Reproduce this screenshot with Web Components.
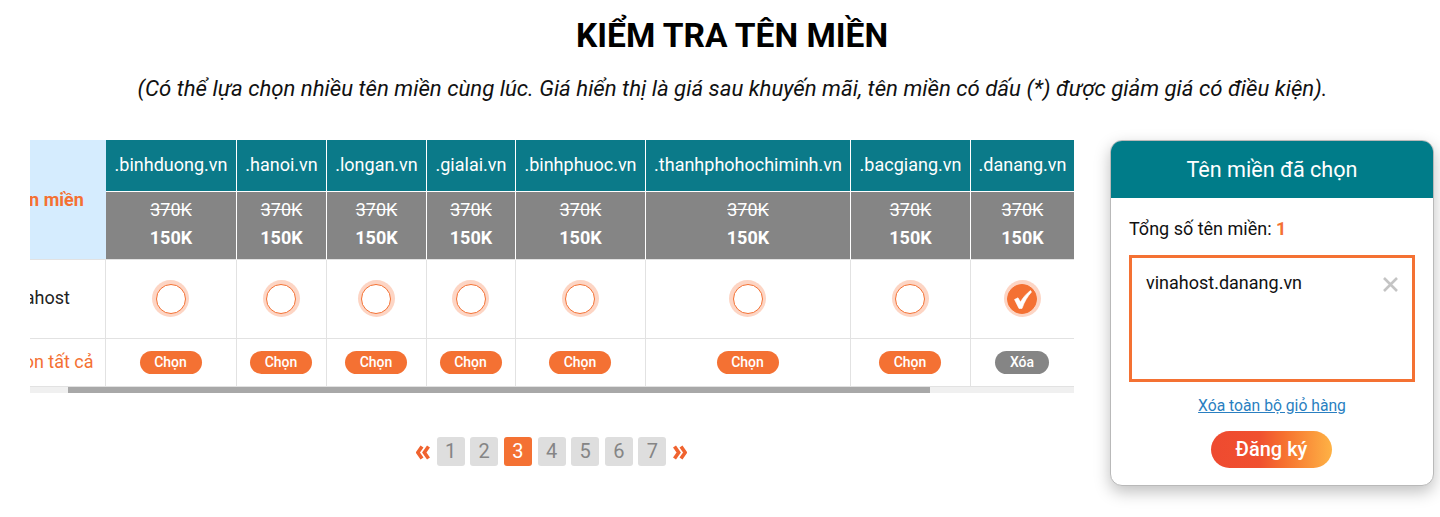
<!DOCTYPE html>
<html lang="vi"><head><meta charset="utf-8"><title>Kiểm tra tên miền</title>
<style>html,body{margin:0;background:#fff;font-family:Roboto,"Noto Sans",sans-serif;color:#111}</style></head>
<body>
<domain-page>
  <span slot="title">KIỂM TRA TÊN MIỀN</span>
  <span slot="sub">(Có thể lựa chọn nhiều tên miền cùng lúc. Giá hiển thị là giá sau khuyến mãi, tên miền có dấu (*) được giảm giá có điều kiện).</span>
  <domain-table slot="table"></domain-table>
  <page-nav slot="table"></page-nav>
  <cart-panel slot="cart"></cart-panel>
</domain-page>
<script>
const make=(name,css,html,init)=>customElements.define(name,class extends HTMLElement{
  connectedCallback(){ if(this.shadowRoot)return; const r=this.attachShadow({mode:'open'}); r.innerHTML='<style>'+css+'</style>'+html(this); init&&init(r,this);}
});
make('domain-page',`
:host{display:block;width:1404px;padding:0 6px 30px 30px;box-sizing:content-box}
h1{margin:0;padding-top:15px;font:700 33.5px/42px Roboto,sans-serif;text-align:center;color:#000;height:42px}
p{margin:0;padding:16px 0 0 1px;font:italic 400 22.2px/30px Roboto,sans-serif;text-align:center;color:#111;height:30px}
.row{display:flex;justify-content:space-between;align-items:flex-start;margin-top:37px}
.left{width:1044px;flex:none}
.right{width:324px;flex:none}
`,()=>`<h1><slot name="title"></slot></h1><p><slot name="sub"></slot></p>
<div class="row"><div class="left"><slot name="table"></slot></div><div class="right"><slot name="cart"></slot></div></div>`);

make('pick-circle',`
:host{display:block;width:37px;height:37px;border-radius:50%;background:#fdd5c4;padding:3.5px;box-sizing:border-box;margin:0 1px 1px 0}
.i{width:30px;height:30px;border-radius:50%;border:1px solid #f47133;box-sizing:border-box;background:#fff;display:block}
:host([on]) .i{background:#f47133}
svg{display:block;width:28px;height:28px}
`,h=>`<div class="i">${h.hasAttribute('on')?'<svg viewBox="0 0 28 28"><path d="M6.5 14.5 L10 12.8 L12.5 17 C15 12.5 18 9 22.5 5.5 L23.5 7 C19.5 11.5 16.5 16.5 14 23.5 L11 23.5 Z" fill="#fff" stroke="#fff" stroke-width=".6" stroke-linejoin="round"/></svg>':''}</div>`);

make('domain-table',`
:host{display:block;font-family:Roboto,sans-serif}
.clip{overflow:hidden;width:1044px}
.g{display:grid;margin-left:-46px;width:1090px;
 grid-template-columns:122px 131px 90px 100px 89px 130px 205px 120px 103px;
 grid-template-rows:52px 68px 79px 48px}
.c{box-sizing:border-box;display:flex;align-items:center;justify-content:center;border-right:1px solid #e2e2e2;border-bottom:1px solid #e2e2e2;background:#fff}
.n{background:#0b7a89;color:#fff;font-size:18px;border-right:1px solid #fff;border-bottom:1px solid #fff;padding-bottom:3px}
.p{background:#858585;color:#fff;flex-direction:column;border-right:1px solid #fff;border-bottom:1px solid #e2e2e2;font-size:18px;line-height:28px;padding-bottom:3px}
.p s{font-weight:400}.p b{font-weight:700}
.lab{grid-row:1/3;background:#d5ecfe;color:#f47133;font-weight:700;font-size:18px;justify-content:flex-start;padding:0 0 1px 25px;border-bottom:1px solid #e2e2e2;border-right:0;white-space:nowrap}
.a{justify-content:flex-start;padding-left:15px;font-size:18px;color:#222;padding-bottom:3px;white-space:nowrap}
.all{justify-content:flex-start;padding-left:18px;font-size:18px;color:#f47133;padding-bottom:3px;white-space:nowrap}
.b{display:block;height:23px;line-height:23px;border-radius:12px;background:#f47133;color:#fff;font-size:14px;font-weight:500;width:62px;text-align:center;margin-right:1px}
.b.x{background:#858585;width:54px}
.last{border-right:0}
.bar{display:flex;height:6px;width:1044px;background:#f0f0f0}
.bar i{display:block;margin-left:38px;width:862px;background:#a8a8a8}
`,()=>{
 const d=['.binhduong.vn','.hanoi.vn','.longan.vn','.gialai.vn','.binhphuoc.vn','.thanhphohochiminh.vn','.bacgiang.vn','.danang.vn'];
 const l=(i)=>i==7?' last':'';
 let h='<div class="clip"><div class="g"><div class="c lab">Tên miền</div>';
 d.forEach((x,i)=>h+=`<div class="c n${l(i)}">${x}</div>`);
 d.forEach((x,i)=>h+=`<div class="c p${l(i)}"><s>370K</s><b>150K</b></div>`);
 h+='<div class="c a">Vinahost</div>';
 d.forEach((x,i)=>h+=`<div class="c${l(i)}"><pick-circle ${i==7?'on':''}></pick-circle></div>`);
 h+='<div class="c all">Chọn tất cả</div>';
 d.forEach((x,i)=>h+=`<div class="c${l(i)}"><span class="b${i==7?' x':''}">${i==7?'Xóa':'Chọn'}</span></div>`);
 return h+'</div></div><div class="bar"><i></i></div>';
});

make('page-nav',`
:host{display:flex;justify-content:center;align-items:center;gap:5.67px;margin-top:44px;padding-right:1px;font-family:Roboto,sans-serif}
a{box-sizing:border-box;width:28px;height:29px;border-radius:3px;background:#dedede;color:#858585;font-size:20px;line-height:29px;text-align:center}
a.on{background:#f47133;color:#fff}
svg{width:14px;height:15px;display:block;margin:2px 1px 0}
`,()=>{const ch=f=>`<svg viewBox="0 0 14 15" style="${f?'transform:scaleX(-1)':''}"><path d="M6 1.5 1.8 7.5 6 13.5M12.5 1.5 8.3 7.5 12.5 13.5" fill="none" stroke="#f0632f" stroke-width="3.6"/></svg>`;
return `${ch(0)}${[1,2,3,4,5,6,7].map(n=>`<a class="${n==3?'on':''}">${n}</a>`).join('')}${ch(1)}`});

make('cart-panel',`
:host{display:block;width:324px;font-family:Roboto,sans-serif}
.card{box-sizing:border-box;width:324px;height:346px;border:1px solid #b9b9b9;border-radius:12px;background:#fff;box-shadow:0 6px 16px rgba(0,0,0,.25)}
.h{background:#007c89;color:#fff;text-align:center;font-size:21.6px;line-height:58px;height:57px;border-radius:11px 11px 0 0}
.t{margin:19px 18px 0;font-size:18px;line-height:24px;color:#111}
.t b{color:#f47133}
.box{margin:14px 18px 0;height:127px;box-sizing:border-box;border:3px solid #f47133;padding:13px 14px;display:flex;justify-content:space-between;font-size:18px;line-height:24px;color:#111}
svg{width:15px;height:15px;margin:6px 0 0 0;flex:none}
.l{display:block;text-align:center;margin-top:13px;font-size:15.7px;line-height:22px;color:#2a7fc1;text-decoration:underline}
.btn{display:block;margin:14px 0 0 100px;width:121px;height:37px;border-radius:19px;background:linear-gradient(90deg,#ee4a30 0%,#f0502f 40%,#f6702f 60%,#feb245 100%);color:#fff;text-align:center;font-size:20px;font-weight:500;line-height:36px}
`,()=>`<div class="card"><div class="h">Tên miền đã chọn</div><div class="t">Tổng số tên miền: <b>1</b></div>
<div class="box"><span>vinahost.danang.vn</span><svg viewBox="0 0 15 15"><path d="M1 1 14 14M14 1 1 14" stroke="#c4c4c4" stroke-width="2.6" fill="none"/></svg></div>
<a class="l">Xóa toàn bộ giỏ hàng</a><a class="btn">Đăng ký</a></div>`);
</script>
</body></html>
